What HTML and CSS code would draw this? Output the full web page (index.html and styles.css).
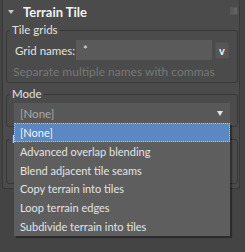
FILE: index.html
```html
<!DOCTYPE html>
<html lang="en">
<head>
  <meta charset="UTF-8">
  <title>Terrain Tile</title>
  <link rel="stylesheet" href="styles.css">
</head>
<body>
  <div class="rollout">
    <div class="rollout-head">
      <span class="caret"></span>
      <span class="rollout-title">Terrain Tile</span>
      <span class="grip"></span>
    </div>

    <fieldset class="group">
      <legend>Tile grids</legend>
      <div class="field-row">
        <span class="field-label">Grid names:</span>
        <span class="text-input">*</span>
        <span class="small-btn">v</span>
      </div>
      <div class="hint">Separate multiple names with commas</div>
    </fieldset>

    <fieldset class="group">
      <legend>Mode</legend>
      <div class="combo">
        <div class="combo-box">
          <span class="combo-value">[None]</span>
          <span class="combo-arrow"></span>
        </div>
        <ul class="combo-list">
          <li class="selected">[None]</li>
          <li>Advanced overlap blending</li>
          <li>Blend adjacent tile seams</li>
          <li>Copy terrain into tiles</li>
          <li>Loop terrain edges</li>
          <li>Subdivide terrain into tiles</li>
        </ul>
      </div>
    </fieldset>

    <fieldset class="group group-under">
      <legend>Blending</legend>
      <div class="under-body"></div>
    </fieldset>
  </div>
</body>
</html>
```

FILE: styles.css
```css
:root {
  --bg: #444444;
  --panel: #4b4b4b;
  --edge: #383838;
  --text: #e2e2e2;
  --text-dim: #777777;
  --field: #5a5a5a;
  --list: #5e5e5e;
  --select: #5b87c3;
}

* {
  margin: 0;
  padding: 0;
  box-sizing: border-box;
}

body {
  font-family: Lato, "Noto Sans", sans-serif;
  font-size: 11px;
  color: var(--text);
  background-color: var(--bg);
  width: 245px;
  height: 252px;
  overflow: hidden;
}

.rollout {
  margin-left: 2px;
  width: 238px;
  background-color: var(--panel);
  border-left: 1px solid var(--edge);
  border-right: 1px solid var(--edge);
  border-bottom: 1px solid var(--edge);
  border-radius: 0 0 3px 3px;
  padding-bottom: 4px;
}

.rollout-head {
  display: flex;
  align-items: center;
  height: 23px;
  padding-left: 5px;
  padding-right: 2px;
}

.caret {
  width: 0;
  height: 0;
  border-left: 3px solid transparent;
  border-right: 3px solid transparent;
  border-top: 4px solid #c8c8c8;
  margin-right: 9px;
  margin-top: 1px;
}

.rollout-title {
  font-size: 13px;
  font-weight: 700;
  color: #f2f2f2;
  flex: 1;
}

.grip {
  width: 6px;
  height: 6px;
  margin-bottom: 2px;
  background:
    linear-gradient(90deg, #5a5a5a 50%, #626262 50%);
  box-shadow: 0 0 0 1px #555;
}

.group {
  margin-left: 3px;
  width: 232px;
  border: 1px solid var(--edge);
  border-radius: 3px;
  padding: 0 7px 3px 7px;
}

.group legend {
  margin-left: -4px;
  padding: 0 2px;
  line-height: 14px;
  font-size: 11.5px;
  color: var(--text);
}

.group + .group {
  margin-top: 4px;
}

.group-under {
  margin-top: 5px !important;
}

.field-row {
  display: flex;
  align-items: center;
  margin-top: 3px;
  height: 20px;
}

.field-label {
  font-size: 11.5px;
  margin-left: 1px;
  width: 61px;
  flex-shrink: 0;
  white-space: nowrap;
}

.text-input {
  width: 136px;
  height: 20px;
  background-color: var(--field);
  padding-left: 7px;
  line-height: 20px;
  font-size: 11px;
  color: #e8e8e8;
}

.small-btn {
  margin-left: 3px;
  width: 14px;
  height: 17px;
  border-radius: 2px;
  background-color: #565656;
  border: 1px solid #505050;
  display: flex;
  align-items: center;
  justify-content: center;
  font-weight: 700;
  font-size: 11px;
  color: #f0f0f0;
}

.hint {
  margin-top: 5px;
  line-height: 14px;
  font-size: 12px;
  color: var(--text-dim);
  margin-left: -1px;
}

.combo {
  position: relative;
  margin-top: 2px;
}

.combo-box {
  display: flex;
  align-items: center;
  justify-content: space-between;
  height: 20px;
  background-color: #585858;
  padding: 0 7px 0 6px;
}

.combo-value {
  color: #a8a8a8;
  font-size: 11.5px;
}

.combo-arrow {
  width: 0;
  height: 0;
  border-left: 3px solid transparent;
  border-right: 3px solid transparent;
  border-top: 5px solid #e6e6e6;
  margin-top: 1px;
}

.combo-list {
  position: absolute;
  top: 20px;
  left: 0;
  right: 0;
  list-style: none;
  background-color: var(--list);
  box-shadow: 2px 2px 1px rgba(0, 0, 0, 0.35);
  z-index: 2;
}

.combo-list li {
  height: 18.8px;
  line-height: 17px;
  padding-left: 5px;
  border: 1px solid transparent;
  font-size: 11px;
  color: #e4e4e4;
}

.combo-list li.selected {
  background-color: var(--select);
  border: 1px dotted #a9c3e6;
  color: #f4f4f4;
}

.under-body {
  height: 34px;
}
```
